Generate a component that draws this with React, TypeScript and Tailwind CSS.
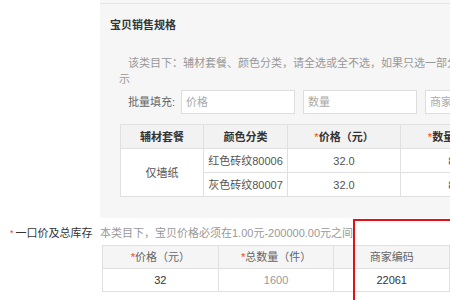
export default function App() {
    const specRows = [
        { color: "红色砖纹80006", price: "32.0", qty: "800" },
        { color: "灰色砖纹80007", price: "32.0", qty: "800" },
    ];

    return (
        <div
            className="relative w-[450px] h-[300px] overflow-hidden bg-white text-[11px] leading-[16px]"
            style={{ fontFamily: '"Liberation Sans", "Noto Sans CJK SC", sans-serif' }}
        >
            {/* 宝贝销售规格 panel */}
            <div className="ml-[100px] w-[600px] h-[218px] bg-[#f6f6f6]">
                <div className="h-[3px]" />
                <div className="border-t border-[#e6e6e6] pl-[10px] pt-[13px]">
                    <div className="font-bold text-[#333]">宝贝销售规格</div>

                    <p className="mt-[22px] ml-[9px] w-[330px] indent-[9px] text-[#999] whitespace-normal">
                        <span className="whitespace-nowrap">该类目下：辅材套餐、颜色分类，请全选或全不选，如果只选一部分则</span>
                        <br />
                        示
                    </p>

                    <div className="mt-[3px] ml-[18px] flex items-center h-[24px]">
                        <span className="w-[53px] text-[#666]">批量填充:</span>
                        <div className="flex gap-[8px]">
                            <div className="w-[114px] h-[24px] bg-white border border-[#ddd] pl-[4px] flex items-center text-[#aaa]">价格</div>
                            <div className="w-[114px] h-[24px] bg-white border border-[#ddd] pl-[4px] flex items-center text-[#aaa]">数量</div>
                            <div className="w-[114px] h-[24px] bg-white border border-[#ddd] pl-[4px] flex items-center text-[#aaa]">商家编码</div>
                        </div>
                    </div>

                    <table className="mt-[10px] ml-[10px] border-collapse text-center">
                        <thead>
                            <tr className="h-[24px] bg-[#f2f2f2] font-bold text-[#333]">
                                <th className="w-[83px] border border-[#e0e0e0] p-0">辅材套餐</th>
                                <th className="w-[84px] border border-[#e0e0e0] p-0">颜色分类</th>
                                <th className="w-[113px] border border-[#e0e0e0] p-0">
                                    <span className="text-[#f40] font-normal">*</span>价格（元）
                                </th>
                                <th className="w-[114px] border border-[#e0e0e0] p-0">
                                    <span className="text-[#f40] font-normal">*</span>数量（件）
                                </th>
                            </tr>
                        </thead>
                        <tbody className="bg-white text-[#555]">
                            {specRows.map((row, i) => (
                                <tr key={row.color} className="h-[24px]">
                                    {i === 0 && (
                                        <td rowSpan={2} className="border border-[#e0e0e0] p-0">
                                            仅墙纸
                                        </td>
                                    )}
                                    <td className="border border-[#e0e0e0] p-0">{row.color}</td>
                                    <td className="border border-[#e0e0e0] p-0">{row.price}</td>
                                    <td className="border border-[#e0e0e0] p-0">{row.qty}</td>
                                </tr>
                            ))}
                        </tbody>
                    </table>
                </div>
            </div>

            {/* 一口价及总库存 */}
            <div className="flex items-center h-[16px] mt-[7px] whitespace-nowrap">
                <span className="w-[100px] flex items-center pl-[10px] text-[#333]">
                    <span className="text-[#f40] text-[9px] mr-[2px]">*</span>
                    一口价及总库存
                </span>
                <span className="text-[#999]">本类目下，宝贝价格必须在1.00元-200000.00元之间</span>
            </div>

            <table className="mt-[4px] ml-[102px] border-collapse text-center">
                <thead>
                    <tr className="h-[23px] bg-[#f5f5f5] text-[#666]">
                        <th className="w-[118px] border border-[#e0e0e0] p-0 font-normal">
                            <span className="text-[#f40]">*</span>价格（元）
                        </th>
                        <th className="w-[118px] border border-[#e0e0e0] p-0 font-normal">
                            <span className="text-[#f40]">*</span>总数量（件）
                        </th>
                        <th className="w-[118px] border border-[#e0e0e0] p-0 font-normal">商家编码</th>
                    </tr>
                </thead>
                <tbody>
                    <tr className="h-[23px] bg-white">
                        <td className="border border-[#e0e0e0] p-0 text-[#333]">32</td>
                        <td className="border border-[#e0e0e0] p-0 text-[#999]">1600</td>
                        <td className="border border-[#e0e0e0] p-0 text-[#333]">22061</td>
                    </tr>
                </tbody>
            </table>

            {/* red highlight box */}
            <div className="absolute left-[353px] top-[219px] w-[200px] h-[200px] border-2 border-[#e3101a]" />
        </div>
    );
}
